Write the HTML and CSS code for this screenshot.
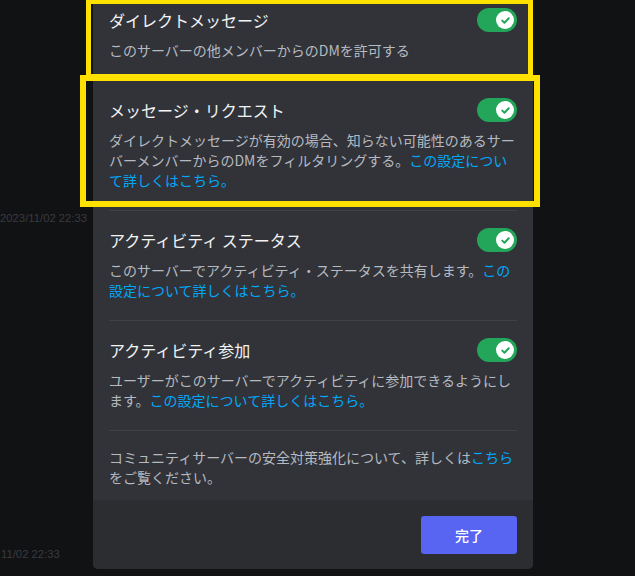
FILE: index.html
```html
<!DOCTYPE html>
<html lang="ja">
<head>
<meta charset="utf-8">
<link rel="stylesheet" href="styles.css">
</head>
<body>
<div class="stage">
  <div class="bg-stamp stamp-1">2023/11/02 22:33</div>
  <div class="bg-stamp stamp-2">11/02 22:33</div>

  <div class="modal">
    <div class="section first">
      <div class="row">
        <div class="title">ダイレクトメッセージ</div>
        <span class="toggle"><span class="knob"><svg viewBox="0 0 20 20" width="13" height="13"><path d="M5 10.2 L8.4 13.4 L15 6.6" fill="none" stroke="#23a55a" stroke-width="3" stroke-linecap="round" stroke-linejoin="round"/></svg></span></span>
      </div>
      <p class="desc">このサーバーの他メンバーからのDMを許可する</p>
    </div>

    <div class="section">
      <div class="row">
        <div class="title">メッセージ・リクエスト</div>
        <span class="toggle"><span class="knob"><svg viewBox="0 0 20 20" width="13" height="13"><path d="M5 10.2 L8.4 13.4 L15 6.6" fill="none" stroke="#23a55a" stroke-width="3" stroke-linecap="round" stroke-linejoin="round"/></svg></span></span>
      </div>
      <p class="desc">ダイレクトメッセージが有効の場合、知らない可能性のあるサーバーメンバーからのDMをフィルタリングする。<a class="link">この設定について詳しくはこちら。</a></p>
    </div>

    <div class="section">
      <div class="row">
        <div class="title">アクティビティ ステータス</div>
        <span class="toggle"><span class="knob"><svg viewBox="0 0 20 20" width="13" height="13"><path d="M5 10.2 L8.4 13.4 L15 6.6" fill="none" stroke="#23a55a" stroke-width="3" stroke-linecap="round" stroke-linejoin="round"/></svg></span></span>
      </div>
      <p class="desc">このサーバーでアクティビティ・ステータスを共有します。<a class="link">この設定について詳しくはこちら。</a></p>
    </div>

    <div class="section">
      <div class="row">
        <div class="title">アクティビティ参加</div>
        <span class="toggle"><span class="knob"><svg viewBox="0 0 20 20" width="13" height="13"><path d="M5 10.2 L8.4 13.4 L15 6.6" fill="none" stroke="#23a55a" stroke-width="3" stroke-linecap="round" stroke-linejoin="round"/></svg></span></span>
      </div>
      <p class="desc">ユーザーがこのサーバーでアクティビティに参加できるようにします。<a class="link">この設定について詳しくはこちら。</a></p>
    </div>

    <div class="note">
      <p class="desc">コミュニティサーバーの安全対策強化について、詳しくは<a class="link">こちら</a>をご覧ください。</p>
    </div>

    <div class="footer">
      <button class="done">完了</button>
    </div>
  </div>

  <div class="highlight hl-1"></div>
  <div class="highlight hl-2"></div>
</div>
</body>
</html>
```

FILE: styles.css
```css
* { box-sizing: border-box; }

html, body {
  margin: 0;
  padding: 0;
  background: #111214;
  overflow: hidden;
}

body {
  font-family: "Noto Sans CJK JP", "Noto Sans", sans-serif;
  width: 635px;
  height: 576px;
}

.stage {
  position: relative;
  width: 635px;
  height: 576px;
}

.bg-stamp {
  position: absolute;
  left: 0;
  font-family: "Liberation Sans", "Noto Sans", sans-serif;
  font-size: 11.3px;
  line-height: 16px;
  color: #3a3b40;
  white-space: nowrap;
}
.stamp-1 { top: 210px; }
.stamp-2 { top: 546px; left: 1px; }

.modal {
  position: relative;
  margin-left: 93px;
  width: 440px;
  background: #313338;
  border-radius: 0 0 5px 5px;
  overflow: hidden;
}

.section {
  margin: 0 16px;
  padding: 17px 0 20px;
  border-bottom: 1px solid #3f4147;
}
.section.first { padding-top: 8px; }

.row {
  display: flex;
  align-items: center;
  justify-content: space-between;
  height: 24px;
}

.title {
  color: #f2f3f5;
  font-size: 16px;
  line-height: 20px;
  font-weight: 400;
}

.desc {
  margin: 8px 0 0;
  color: #b5bac1;
  font-size: 14px;
  line-height: 20px;
  line-break: strict;
}

.link { color: #00a8fc; }

.note {
  margin: 0 16px;
  padding: 16px 0 13px;
}
.note .desc { margin: 0; }

.toggle {
  display: flex;
  align-items: center;
  justify-content: flex-end;
  width: 40px;
  height: 24px;
  padding: 0 3px;
  border-radius: 12px;
  background: #23a55a;
  flex: none;
}
.knob {
  display: flex;
  align-items: center;
  justify-content: center;
  width: 18px;
  height: 18px;
  border-radius: 50%;
  background: #ffffff;
}

.footer {
  background: #2b2d31;
  padding: 16px 16px 15px;
  display: flex;
  justify-content: flex-end;
}

.done {
  width: 96px;
  height: 38px;
  border: 0;
  border-radius: 3px;
  background: #5865f2;
  color: #ffffff;
  font-family: "Noto Sans CJK JP", "Noto Sans", sans-serif;
  font-size: 14px;
  font-weight: 500;
}

.highlight {
  position: absolute;
  border-style: solid;
  border-color: #ffe100;
  pointer-events: none;
}
.hl-1 {
  left: 86px;
  top: -1px;
  width: 447px;
  height: 80px;
  border-width: 5px;
}
.hl-2 {
  left: 80px;
  top: 75px;
  width: 460px;
  height: 132px;
  border-width: 6px;
}
```
